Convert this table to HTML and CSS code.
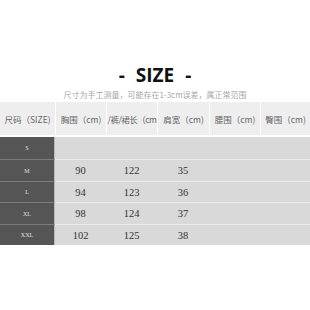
FILE: index.html
```html
<!DOCTYPE html>
<html>
<head>
<meta charset="utf-8">
<link rel="stylesheet" href="styles.css">
</head>
<body>
<div class="page">
  <div class="title"><span class="dash">-</span><span class="word">SIZE</span><span class="dash">-</span></div>
  <div class="note">尺寸为手工测量，可能存在1-3cm误差，属正常范围</div>
  <div class="table">
    <div class="row head">
      <div class="hc">尺码（SIZE)</div>
      <div class="hc">胸围（cm)</div>
      <div class="hc tight">/裤/裙长（cm</div>
      <div class="hc">肩宽（cm)</div>
      <div class="hc">腰围（cm)</div>
      <div class="hc">臀围（cm)</div>
    </div>
    <div class="row data r1">
      <div class="sz">S</div>
      <div class="dc"></div><div class="dc"></div><div class="dc"></div><div class="dc"></div><div class="dc"></div>
    </div>
    <div class="row data">
      <div class="sz">M</div>
      <div class="dc">90</div><div class="dc">122</div><div class="dc">35</div><div class="dc"></div><div class="dc"></div>
    </div>
    <div class="row data short">
      <div class="sz">L</div>
      <div class="dc">94</div><div class="dc">123</div><div class="dc">36</div><div class="dc"></div><div class="dc"></div>
    </div>
    <div class="row data">
      <div class="sz">XL</div>
      <div class="dc">98</div><div class="dc">124</div><div class="dc">37</div><div class="dc"></div><div class="dc"></div>
    </div>
    <div class="row data short">
      <div class="sz">XXL</div>
      <div class="dc">102</div><div class="dc">125</div><div class="dc">38</div><div class="dc"></div><div class="dc"></div>
    </div>
  </div>
</div>
</body>
</html>
```
FILE: styles.css
```css
html, body {
  margin: 0;
  padding: 0;
  background: #ffffff;
}
.page {
  width: 310px;
  height: 310px;
  padding-top: 62px;
  box-sizing: border-box;
}
.title {
  display: flex;
  justify-content: center;
  align-items: center;
  gap: 11px;
  height: 26px;
  font-family: "Open Sans", "Noto Sans", sans-serif;
  font-weight: 700;
  font-size: 19px;
  color: #111;
  line-height: 26px;
}
.note {
  text-align: center;
  font-family: "Noto Sans CJK SC", "Noto Sans", sans-serif;
  font-size: 8px;
  color: #a8a8a8;
  height: 14px;
  line-height: 14px;
}
.table {
  display: flex;
  flex-direction: column;
}
.row {
  display: grid;
  grid-template-columns: 55px 51px 51px 52px 51px 50px;
}
.head {
  height: 33px;
  background: #ffffff;
}
.hc {
  background: #eeeeee;
  margin-left: 1px;
  display: flex;
  justify-content: center;
  align-items: center;
  overflow: hidden;
  white-space: nowrap;
  font-family: "Noto Sans CJK SC", "Noto Sans", sans-serif;
  font-size: 8.5px;
  color: #666;
}
.hc:first-child {
  margin-left: 0;
}
.hc.tight {
  letter-spacing: -0.5px;
}
.data {
  height: 22px;
}
.data.short {
  height: 21px;
}
.r1 {
  margin-top: 2px;
}
.data + .data .sz {
  border-top: 1px solid #7c7c7c;
}
.data + .data .dc {
  border-top: 1px solid #ececec;
}
.sz {
  background: #555555;
  border-right: 1px solid #b8b8b8;
  display: flex;
  justify-content: center;
  align-items: center;
  font-family: "Liberation Serif", serif;
  font-size: 6px;
  color: #e0e0e0;
}
.dc {
  background: #d9d9d9;
  display: flex;
  justify-content: center;
  align-items: center;
  font-family: "Liberation Serif", serif;
  font-size: 10.5px;
  color: #333;
}
```
